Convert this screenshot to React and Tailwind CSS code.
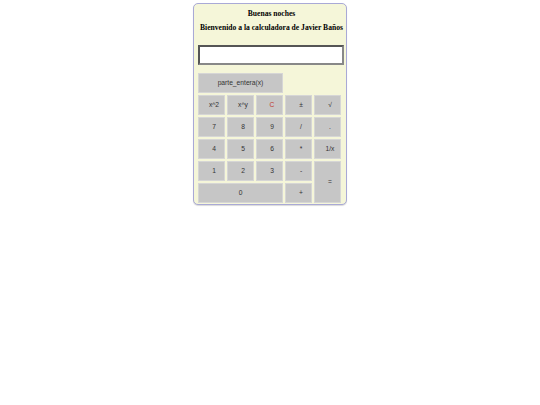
const rows = [
  { label: 'x^2' },
  { label: 'x^y' },
  { label: 'C', red: true },
  { label: '±' },
  { label: '√' },
  { label: '7' },
  { label: '8' },
  { label: '9' },
  { label: '/' },
  { label: '.' },
  { label: '4' },
  { label: '5' },
  { label: '6' },
  { label: '*' },
  { label: '1/x' },
];

export default function App() {
  return (
    <div className="min-h-[405px] w-[540px] bg-white pt-[3px]">
      <div className="mx-auto box-border w-[154px] rounded-[5px] border border-[#a9a9d6] bg-[#f5f6d9] pb-[1px] pl-[4px] pr-[1px] shadow-[0_1px_1px_rgba(0,0,0,0.15)] [font-family:'Liberation_Serif',serif]">
        <div className="pt-[5px] text-center text-[7.6px] font-bold leading-[10px] text-black">Buenas noches</div>
        <div className="mt-[4px] whitespace-nowrap text-center text-[7.6px] font-bold leading-[10px] text-black">
          Bienvenido a la calculadora de Javier Baños
        </div>
        <div className="mt-[12px] h-[20px] w-[146px] border-2 border-t-[#555] border-l-[#555] border-b-[#888] border-r-[#888] bg-white" />
        <div className="mt-[8px] grid w-[143px] grid-cols-5 grid-rows-[repeat(6,20px)] gap-[2px] text-[6.7px] [font-family:'Liberation_Sans',Arial,sans-serif]">
          <Key label="parte_entera(x)" wide className="col-span-3" />
          <div className="col-span-2" />
          {rows.map((r, i) => (
            <Key key={i} label={r.label} red={r.red} />
          ))}
          <Key label="1" />
          <Key label="2" />
          <Key label="3" />
          <Key label="-" />
          <Key label="=" className="row-span-2" />
          <Key label="0" wide className="col-span-3" />
          <Key label="+" />
        </div>
      </div>
    </div>
  );
}

function Key({ label, red = false, wide = false, className = '' }) {
  return (
    <button
      type="button"
      className={`flex items-center justify-center border border-[#d6d6d6] bg-[#c6c6c6] py-0 pr-0 leading-none ${
        wide ? 'pl-0' : 'pl-[5px]'
      } ${red ? 'text-[#c0392b]' : 'text-[#333]'} ${className}`}
    >
      {label}
    </button>
  );
}
